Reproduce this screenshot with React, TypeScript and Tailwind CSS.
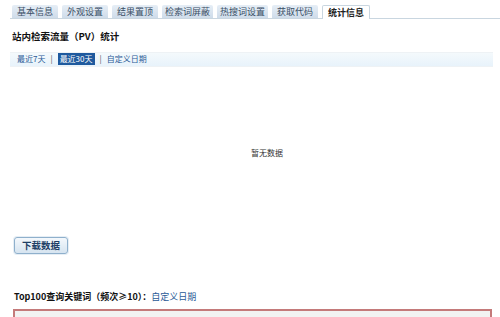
const tabs = ["基本信息", "外观设置", "结果置顶", "检索词屏蔽", "热搜词设置", "获取代码"];

const font = { fontFamily: '"Noto Sans CJK SC", "Liberation Sans", sans-serif' };

export default function App() {
  return (
    <div className="w-[500px] h-[317px] overflow-hidden bg-white text-[11px] text-[#333]" style={font}>
      {/* 顶部标签 */}
      <div className="flex items-end gap-[4px] pl-[2px] pt-[5px] border-b border-[#c9d6e0] ml-[10px]">
        {tabs.map((t) => (
          <div
            key={t}
            className={
              t.length > 4
                ? "h-[13px] px-[3px] flex items-center rounded-t-[2px] bg-gradient-to-b from-[#e6eef6] to-[#cfdcea] text-[#3a4f66] text-[9px] leading-none"
                : "h-[13px] px-[5px] flex items-center rounded-t-[2px] bg-gradient-to-b from-[#e6eef6] to-[#cfdcea] text-[#3a4f66] text-[9px] leading-none"
            }
          >
            {t}
          </div>
        ))}
        <div className="h-[14px] px-[5px] flex items-center rounded-t-[2px] bg-white border border-b-0 border-[#c9d6e0] text-[#222] text-[9px] font-bold leading-none -mb-px">
          统计信息
        </div>
      </div>

      <div className="px-[12px]">
        <div className="mt-[13px] text-[9.5px] font-bold text-[#111] leading-none">站内检索流量（PV）统计</div>

        <div className="mt-[10px] h-[15px] w-[483px] -ml-[2px] bg-gradient-to-b from-[#f4f9fc] to-[#e8f3fb] border-y border-[#eef2f5] flex items-center pl-[7px] text-[8px] text-[#2a5a96]">
          <span>最近7天</span>
          <span className="mx-[5px] text-[#555]">|</span>
          <span className="bg-[#1f5a9e] text-white px-[2px] leading-[12px]">最近30天</span>
          <span className="mx-[5px] text-[#555]">|</span>
          <span>自定义日期</span>
        </div>

        <div className="h-[169px] flex items-center justify-center pl-[34px] pt-[4px] text-[8px] text-[#333]">暂无数据</div>

        <button className="ml-[2px] h-[17px] px-[7px] rounded-[3px] border border-[#8fb0cc] bg-gradient-to-b from-[#f4f8fc] to-[#d6e4f0] text-[9.5px] font-bold text-[#1f3f66] leading-none shadow-[0_0_0_1px_#e6eef5]">
          下载数据
        </button>

        <div className="mt-[38px] ml-[2px] text-[9px] font-bold text-[#111] leading-none">
          Top100查询关键词（频次≥10）：<span className="font-normal text-[#2a5a96]">自定义日期</span>
        </div>

        <div className="mt-[8px] h-[20px] w-[479px] ml-[1px] border-2 border-[#c47a7a] bg-[#f2f2f2]"></div>
      </div>
    </div>
  );
}
